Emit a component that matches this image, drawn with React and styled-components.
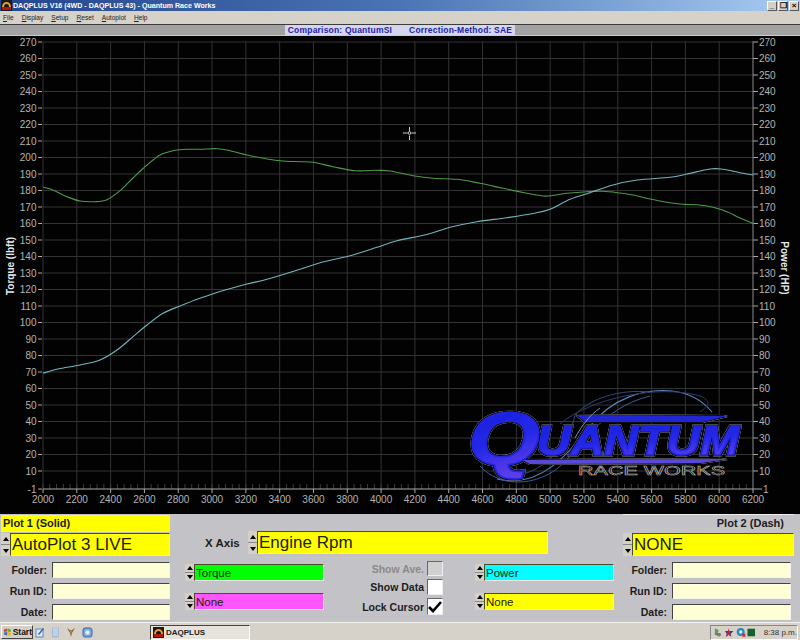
import styled, { createGlobalStyle } from 'styled-components';

const GlobalStyle = createGlobalStyle`
  html, body {
    margin: 0;
    background: #000;
    overflow: hidden;
  }
`;

const UI_FONT = '"Liberation Sans", Arial, sans-serif';

const torque = [
  [43, 187], [53, 190], [67, 196.7], [80, 201], [95, 201.7], [107, 199.7], [120, 190.7], [133, 178],
  [147, 165], [160, 155], [173, 150.7], [187, 149.3], [200, 149.3], [217, 148.7], [230, 150.7], [247, 155],
  [267, 159], [283, 161], [300, 161.7], [313, 162.3], [333, 166.7], [355, 170.7], [377, 170.3], [390, 171],
  [413, 175.7], [433, 178.3], [457, 179.3], [480, 183.3], [503, 188.3], [527, 193.3], [543, 196], [550, 195.7],
  [567, 193.3], [587, 191.7], [603, 191.3], [620, 193], [633, 195], [650, 199], [667, 202.3], [683, 204.3],
  [697, 204.7], [713, 207.3], [727, 211.7], [740, 218], [753, 223.3],
];

const power = [
  [43, 373.3], [58, 369], [80, 365], [100, 360], [117, 350], [133, 336.7], [147, 325], [163, 313.3],
  [180, 306], [200, 298.3], [220, 291.5], [247, 284], [267, 279.3], [300, 269.3], [320, 262.7], [353, 255],
  [377, 247.3], [397, 240.7], [427, 234.5], [450, 227.3], [477, 221.7], [507, 217.7], [533, 213.5], [550, 209.3],
  [570, 199.3], [590, 192.7], [613, 185], [637, 180], [670, 177.3], [687, 174], [710, 169], [723, 169.3],
  [740, 172.7], [753, 175],
];

// catmull-rom through the sampled points
const smooth = (pts) => {
  let d = `M${pts[0][0]} ${pts[0][1]}`;
  for (let i = 0; i < pts.length - 1; i++) {
    const p0 = pts[i - 1] || pts[i];
    const p1 = pts[i];
    const p2 = pts[i + 1];
    const p3 = pts[i + 2] || p2;
    const c1x = p1[0] + (p2[0] - p0[0]) / 6;
    const c1y = p1[1] + (p2[1] - p0[1]) / 6;
    const c2x = p2[0] - (p3[0] - p1[0]) / 6;
    const c2y = p2[1] - (p3[1] - p1[1]) / 6;
    d += `C${c1x.toFixed(1)} ${c1y.toFixed(1)} ${c2x.toFixed(1)} ${c2y.toFixed(1)} ${p2[0]} ${p2[1]}`;
  }
  return d;
};

const PLOT_LEFT = 43;
const PLOT_RIGHT = 753;
const PLOT_TOP = 41.5;
const PLOT_BOTTOM = 489;
const STEP_X = (PLOT_RIGHT - PLOT_LEFT) / 21;
const yFor = (v) => 487.5 - v * 1.65;

const yValues = Array.from({ length: 27 }, (_, i) => 270 - i * 10);
const xValues = Array.from({ length: 22 }, (_, i) => i);
const minorTicks = Array.from({ length: 105 }, (_, i) => i);

const Screen = styled.div`
  width: 800px;
  height: 640px;
  display: flex;
  flex-direction: column;
  font-family: ${UI_FONT};
  background: #000;
  overflow: hidden;
`;

const TitleBar = styled.div`
  height: 11px;
  flex: none;
  display: flex;
  align-items: center;
  padding: 0 1px;
  background: linear-gradient(90deg, #24458f 0%, #4a74b4 50%, #a8ccf2 100%);
`;

const TitleText = styled.span`
  flex: 1;
  margin-left: 1px;
  font-size: 7.1px;
  font-weight: 700;
  color: #fff;
  white-space: nowrap;
`;

const WinButtons = styled.div`
  display: flex;
  gap: 1px;
`;

const WinButton = styled.div`
  width: 8px;
  height: 8px;
  background: #d4d0c8;
  border: 1px solid;
  border-color: #fff #555 #555 #fff;
  color: #000;
  font-size: 8px;
  font-weight: 700;
  line-height: 8px;
  text-align: center;
  overflow: hidden;
`;

const MenuBar = styled.div`
  height: 13px;
  flex: none;
  display: flex;
  align-items: center;
  gap: 8px;
  padding-left: 3px;
  background: #d6d2ca;
  border-bottom: 1px solid #3c3c3c;
  font-size: 6.6px;
  color: #222;

  u {
    text-decoration: underline;
  }
`;

const CompareBar = styled.div`
  height: 10px;
  flex: none;
  display: flex;
  justify-content: center;
  background: #a2a2a2;
  border-bottom: 1px solid #ccc;
`;

const CompareLabel = styled.div`
  width: 230px;
  display: flex;
  justify-content: center;
  gap: 17px;
  background: #d6d6ee;
  color: #2424ac;
  font-size: 8.5px;
  font-weight: 700;
  letter-spacing: 0.2px;
  line-height: 10px;
  white-space: nowrap;
`;

const ChartArea = styled.svg`
  display: block;
  flex: none;
  width: 800px;
  height: 478px;
  background: #020202;
`;

const AxisText = styled.text`
  font-family: ${UI_FONT};
  font-size: 10px;
  fill: #b4b4b4;
`;

const AxisTitle = styled.text`
  font-family: ${UI_FONT};
  font-size: 10px;
  font-weight: 700;
  fill: #e8e8e8;
  text-anchor: middle;
`;

const LogoLetters = styled.text`
  font-family: ${UI_FONT};
  font-weight: 700;
  font-style: italic;
  fill: url(#logoFill);
  stroke: #2228e0;
  stroke-width: 1.5;
  stroke-linejoin: miter;
`;

const LogoSub = styled.text`
  font-family: ${UI_FONT};
  font-size: 12.5px;
  fill: #060606;
  stroke: #bcbcbc;
  stroke-width: 0.5;
`;

const Panel = styled.div`
  height: 108px;
  flex: none;
  display: flex;
  background: #c3c3c7;
  font-size: 10.5px;
  font-weight: 700;
  color: #1c1c1c;
`;

const PlotColumn = styled.div`
  flex: none;
  width: ${(p) => p.$width}px;
  box-sizing: border-box;
  padding: ${(p) => p.$padding};
  display: flex;
  flex-direction: column;
`;

const CenterColumn = styled.div`
  flex: 1;
  display: flex;
  flex-direction: column;
  padding: 17px 0 0 13px;
`;

const PlotHeader = styled.div`
  height: 17px;
  line-height: 17px;
  padding: 0 ${(p) => (p.$right ? '10px' : '2px')} 0 2px;
  text-align: ${(p) => (p.$right ? 'right' : 'left')};
  background: ${(p) => (p.$right ? 'transparent' : '#ffff00')};
  border-top: ${(p) => (p.$right ? '1px solid #eee' : 'none')};
  margin-top: ${(p) => (p.$right ? '-1px' : '0')};
  font-size: 11px;
`;

const SpinRow = styled.div`
  display: flex;
  height: ${(p) => p.$height}px;
  margin-top: ${(p) => p.$top || 0}px;
  align-items: stretch;
`;

const Spinner = styled.div`
  flex: none;
  width: 9px;
  display: flex;
  flex-direction: column;
  background: #d4d0c8;
`;

const SpinUp = styled.div`
  flex: 1;
  display: flex;
  align-items: center;
  justify-content: center;
  border-bottom: 1px solid #8a8a8a;

  &::before {
    content: '';
    border: 3.5px solid transparent;
    border-top: 0;
    border-bottom: 4px solid #000;
  }
`;

const SpinDown = styled(SpinUp)`
  border-bottom: 0;

  &::before {
    border: 3.5px solid transparent;
    border-bottom: 0;
    border-top: 4px solid #000;
  }
`;

const Field = styled.div`
  flex: 1;
  min-width: 0;
  box-sizing: border-box;
  padding-left: 1px;
  display: flex;
  align-items: center;
  background: ${(p) => p.$bg};
  border: 1px solid;
  border-color: #4c4c30 #e8e8e8 #e8e8e8 #4c4c30;
  font-size: ${(p) => p.$size}px;
  font-weight: 400;
  color: #222200;
  white-space: nowrap;
`;

const InfoRows = styled.div`
  display: flex;
  flex-direction: column;
  gap: 5px;
  margin-top: 6px;
`;

const InfoRow = styled.div`
  height: 16px;
  display: flex;
  align-items: center;
`;

const InfoLabel = styled.div`
  width: ${(p) => p.$width}px;
  flex: none;
  text-align: right;
  padding-right: 5px;
  box-sizing: border-box;
`;

const InfoInput = styled.div`
  width: ${(p) => p.$width}px;
  height: 16px;
  box-sizing: border-box;
  background: #ffffd6;
  border: 1px solid;
  border-color: #444 #f4f4f4 #f4f4f4 #444;
`;

const XAxisRow = styled.div`
  display: flex;
  height: 23px;
  align-items: center;
  padding-left: 20px;
`;

const XAxisLabel = styled.div`
  width: 43px;
  font-size: 11.5px;
`;

const XAxisField = styled.div`
  display: flex;
  width: 300px;
  height: 23px;
`;

const SeriesGrid = styled.div`
  display: grid;
  grid-template-columns: 139px 151px 139px;
  margin-top: 7px;
`;

const SeriesColumn = styled.div`
  display: flex;
  flex-direction: column;
  gap: 12px;
  padding-top: 3px;
`;

const CheckColumn = styled.div`
  display: flex;
  flex-direction: column;
  gap: 3px;
  padding-right: 32px;
`;

const CheckRow = styled.div`
  display: flex;
  justify-content: flex-end;
  align-items: center;
  gap: 3px;
  color: ${(p) => (p.$disabled ? '#8a8a8a' : 'inherit')};
`;

const CheckBox = styled.div`
  width: 16px;
  height: ${(p) => p.$height}px;
  box-sizing: border-box;
  background: ${(p) => (p.$disabled ? '#d0d0d0' : '#fff')};
  border: 1px solid;
  border-color: #666 #eee #eee #666;
  display: flex;
  align-items: center;
  justify-content: center;
`;

const TaskBar = styled.div`
  height: 18px;
  flex: none;
  box-sizing: border-box;
  display: flex;
  align-items: center;
  padding: 1px 2px 0 1px;
  background: #d6d2ca;
  border-top: 1px solid #f4f2ec;
`;

const StartButton = styled.div`
  width: 32px;
  height: 14px;
  box-sizing: border-box;
  display: flex;
  align-items: center;
  gap: 1px;
  padding-left: 1px;
  background: #d4d0c8;
  border: 1px solid;
  border-color: #fff #444 #444 #fff;
  font-size: 8.5px;
  font-weight: 700;
  color: #111;
`;

const QuickIcons = styled.div`
  display: flex;
  gap: 6px;
  margin-left: 2px;
  width: 115px;
`;

const TaskButton = styled.div`
  width: 100px;
  height: 15px;
  box-sizing: border-box;
  display: flex;
  align-items: center;
  gap: 2px;
  padding-left: 2px;
  background: #e6e3dc;
  border: 1px solid;
  border-color: #444 #fff #fff #444;
  font-size: 8px;
  font-weight: 700;
  color: #222;
`;

const Tray = styled.div`
  margin-left: auto;
  width: 88px;
  height: 15px;
  box-sizing: border-box;
  display: flex;
  align-items: center;
  gap: 1px;
  padding-left: 2px;
  border: 1px solid;
  border-color: #888 #fff #fff #888;
  font-size: 8px;
  color: #333;
`;

const Clock = styled.span`
  margin-left: 7px;
  white-space: nowrap;
`;

const AppIcon = ({ size = 11 }) => (
  <svg width={size} height={size} viewBox="0 0 11 11">
    <rect width="11" height="11" fill="#1a1a1a" />
    <path d="M1 7a4.5 5 0 0 1 9 0z" fill="#e8a020" />
    <path d="M1 7h9v3H1z" fill="#b01808" />
    <path d="M3 7a2.5 3 0 0 1 5 0z" fill="#111" />
  </svg>
);

const StartFlag = () => (
  <svg width="10" height="10" viewBox="0 0 10 10">
    <path d="M1 2l4-1v3.5L1 5z" fill="#d8482a" />
    <path d="M5.5 1L9 2v3L5.5 4.5z" fill="#6aa82c" />
    <path d="M1 5.5l4-.5v4l-4-1z" fill="#3a6cc8" />
    <path d="M5.5 5L9 5.5V9L5.5 9z" fill="#e8b820" />
  </svg>
);

const NoteIcon = () => (
  <svg width="10" height="11" viewBox="0 0 10 11">
    <rect x="1" y="2" width="7" height="8" fill="#dfe8f4" stroke="#4a70b0" strokeWidth="0.8" />
    <path d="M3 7l5-6 1 1-5 6z" fill="#2a60b8" />
  </svg>
);

const PageIcon = () => (
  <svg width="9" height="11" viewBox="0 0 9 11">
    <rect x="1" y="0.5" width="7" height="10" fill="#a8bcd8" />
    <path d="M2 2h5M2 4h5M2 6h5M2 8h5" stroke="#e6eef8" strokeWidth="0.8" />
  </svg>
);

const BirdIcon = () => (
  <svg width="10" height="11" viewBox="0 0 10 11">
    <path d="M1 1l3 5 1 4 1-4 3-5-3 2-1 3-1-3z" fill="#a85a30" />
    <path d="M4 3l1 5 1-5z" fill="#5a9a50" />
  </svg>
);

const GlobeIcon = () => (
  <svg width="11" height="11" viewBox="0 0 11 11">
    <rect x="1" y="1" width="9" height="9" rx="2" fill="#7aa8d8" stroke="#3a6aa8" />
    <circle cx="5.5" cy="5.5" r="2.2" fill="#e4eef8" />
  </svg>
);

const TrayNet = () => (
  <svg width="11" height="11" viewBox="0 0 11 11">
    <path d="M2 1l4 2-1 3 4 2-2 2-5-2z" fill="#5a9a5a" />
    <path d="M2 6h6v2H2z" fill="#777" />
  </svg>
);

const TrayStar = () => (
  <svg width="11" height="11" viewBox="0 0 11 11">
    <path d="M1 4h9L7 7l1 3-3-2-3 2 1-3z" fill="#3a3a80" />
    <path d="M5 1l2 9-2-2-3 2z" fill="#c82838" />
  </svg>
);

const TrayGlobe = () => (
  <svg width="11" height="11" viewBox="0 0 11 11">
    <circle cx="5" cy="5" r="4.2" fill="#2a88c0" />
    <circle cx="5" cy="5" r="1.8" fill="#e8f0f8" />
    <path d="M7 7l3 3M10 7l-3 3" stroke="#c82020" strokeWidth="1.2" />
  </svg>
);

const TraySquare = () => (
  <svg width="9" height="9" viewBox="0 0 9 9">
    <rect width="8" height="8" x="0.5" y="0.5" fill="#14602a" />
  </svg>
);

const QuantumLogo = () => (
  <g>
    <defs>
      <linearGradient id="logoFill" x1="0" y1="0" x2="0.3" y2="1">
        <stop offset="0" stopColor="#1a1ad8" />
        <stop offset="0.6" stopColor="#2228e8" />
        <stop offset="1" stopColor="#5a3ce8" />
      </linearGradient>
      <filter id="logoEdge" x="-5%" y="-10%" width="110%" height="120%">
        <feMorphology in="SourceAlpha" operator="dilate" radius="0.7" result="inner" />
        <feFlood floodColor="#0a0a10" />
        <feComposite in2="inner" operator="in" result="dark" />
        <feMorphology in="SourceAlpha" operator="dilate" radius="1.3" result="outer" />
        <feFlood floodColor="#9a9cb0" />
        <feComposite in2="outer" operator="in" result="light" />
        <feMerge>
          <feMergeNode in="light" />
          <feMergeNode in="dark" />
          <feMergeNode in="SourceGraphic" />
        </feMerge>
      </filter>
    </defs>
    <g fill="none">
      <path d="M497 479C540 490 570 452 590 426C612 398 645 388 672 391C690 393 702 400 712 412" stroke="#5a86b8" strokeWidth="1.1" />
      <path d="M480 466C500 488 535 486 558 468C580 450 600 408 650 396" stroke="#3c5a98" strokeWidth="1" />
      <path d="M500 476C545 480 570 440 575 415C590 398 620 389 650 392" stroke="#30487c" strokeWidth="1" />
      <path d="M560 424C590 398 660 384 700 396C715 402 705 408 700 412" stroke="#2a3c70" strokeWidth="1" />
    </g>
    <g filter="url(#logoEdge)">
      <path d="M577 415L727 416L702 422L585 422Z" fill="#2226d0" />
      <path d="M523 460L727 459L700 463L530 464Z" fill="#5a48d8" />
      <LogoLetters x="468" y="464" fontSize="74" textLength="72" lengthAdjust="spacingAndGlyphs">Q</LogoLetters>
      <LogoLetters x="537" y="455" fontSize="42" textLength="202" lengthAdjust="spacingAndGlyphs">UANTUM</LogoLetters>
    </g>
    <path d="M575 438C582 425 590 415 600 408" fill="none" stroke="#7aa4d0" strokeWidth="0.9" />
    <LogoSub x="578" y="474.5" textLength="147" lengthAdjust="spacingAndGlyphs">RACE WORKS</LogoSub>
  </g>
);

const Chart = () => (
  <ChartArea viewBox="0 36 800 478">
    {yValues.map((v) => (
      <g key={v}>
        <line x1={PLOT_LEFT} x2={PLOT_RIGHT} y1={yFor(v)} y2={yFor(v)} stroke="#333" />
        <line x1="38" x2="42" y1={yFor(v)} y2={yFor(v)} stroke="#aaa" />
        <line x1={PLOT_RIGHT} x2="758" y1={yFor(v)} y2={yFor(v)} stroke="#aaa" />
        <AxisText x="36.5" y={yFor(v) + 3.5} textAnchor="end">{v}</AxisText>
        <AxisText x="759" y={yFor(v) + 3.5}>{v}</AxisText>
      </g>
    ))}
    {xValues.map((i) => (
      <g key={i}>
        <line x1={PLOT_LEFT + i * STEP_X} x2={PLOT_LEFT + i * STEP_X} y1={PLOT_TOP} y2={PLOT_BOTTOM} stroke={i === 21 ? '#8a8a8a' : '#333'} />
        <line x1={PLOT_LEFT + i * STEP_X} x2={PLOT_LEFT + i * STEP_X} y1={PLOT_BOTTOM} y2="493" stroke="#aaa" />
        <AxisText x={PLOT_LEFT + i * STEP_X} y="503" textAnchor="middle">{2000 + i * 200}</AxisText>
      </g>
    ))}
    {minorTicks.map((i) => (
      <line key={i} x1={PLOT_LEFT + (i * STEP_X) / 5} x2={PLOT_LEFT + (i * STEP_X) / 5} y1="484" y2={PLOT_BOTTOM} stroke="#3c3c3c" />
    ))}
    <line x1={PLOT_LEFT} x2={PLOT_RIGHT} y1={PLOT_BOTTOM} y2={PLOT_BOTTOM} stroke="#aaa" />
    <line x1="38" x2="42" y1={PLOT_BOTTOM} y2={PLOT_BOTTOM} stroke="#aaa" />
    <line x1={PLOT_RIGHT} x2="762" y1={PLOT_BOTTOM} y2={PLOT_BOTTOM} stroke="#aaa" />
    <AxisText x="36.5" y="493" textAnchor="end">-1</AxisText>
    <AxisText x="763" y="493">1</AxisText>

    <QuantumLogo />

    <path d={smooth(torque)} fill="none" stroke="#4e9a48" strokeWidth="1.1" />
    <path d={smooth(power)} fill="none" stroke="#74b4bc" strokeWidth="1.1" />

    <g stroke="#cfcfcf" fill="none">
      <path d="M403 133h4.5M411.5 133h4.5M409.5 127v4.5M409.5 135.5v4.5" />
      <circle cx="409.5" cy="133" r="1.4" />
    </g>

    <AxisTitle transform="translate(14 266) rotate(-90)">Torque (lbft)</AxisTitle>
    <AxisTitle transform="translate(781 268) rotate(90)">Power (HP)</AxisTitle>
  </ChartArea>
);

const Spin = () => (
  <Spinner>
    <SpinUp />
    <SpinDown />
  </Spinner>
);

const Selector = ({ bg, children }) => (
  <SpinRow $height={17}>
    <Spin />
    <Field $bg={bg} $size={11.5}>{children}</Field>
  </SpinRow>
);

const InfoFields = ({ labelWidth, inputWidth }) => (
  <InfoRows>
    {['Folder:', 'Run ID:', 'Date:'].map((label) => (
      <InfoRow key={label}>
        <InfoLabel $width={labelWidth}>{label}</InfoLabel>
        <InfoInput $width={inputWidth} />
      </InfoRow>
    ))}
  </InfoRows>
);

const App = () => (
  <Screen>
    <GlobalStyle />
    <TitleBar>
      <AppIcon />
      <TitleText>DAQPLUS V16 (4WD - DAQPLUS 43) - Quantum Race Works</TitleText>
      <WinButtons>
        <WinButton>_</WinButton>
        <WinButton>❐</WinButton>
        <WinButton>×</WinButton>
      </WinButtons>
    </TitleBar>
    <MenuBar>
      <span><u>F</u>ile</span>
      <span><u>D</u>isplay</span>
      <span><u>S</u>etup</span>
      <span><u>R</u>eset</span>
      <span><u>A</u>utoplot</span>
      <span><u>H</u>elp</span>
    </MenuBar>
    <CompareBar>
      <CompareLabel>
        <span>Comparison: QuantumSI</span>
        <span>Correction-Method: SAE</span>
      </CompareLabel>
    </CompareBar>
    <Chart />
    <Panel>
      <PlotColumn $width={172} $padding="1px 2px 0 1px">
        <PlotHeader>Plot 1 (Solid)</PlotHeader>
        <SpinRow $height={23} $top={1}>
          <Spin />
          <Field $bg="#ffff00" $size={17}>AutoPlot 3 LIVE</Field>
        </SpinRow>
        <InfoFields labelWidth={51} inputWidth={118} />
      </PlotColumn>
      <CenterColumn>
        <XAxisRow>
          <XAxisLabel>X Axis</XAxisLabel>
          <XAxisField>
            <Spin />
            <Field $bg="#ffff00" $size={17}>Engine Rpm</Field>
          </XAxisField>
        </XAxisRow>
        <SeriesGrid>
          <SeriesColumn>
            <Selector bg="#00ff00">Torque</Selector>
            <Selector bg="#ff55ff">None</Selector>
          </SeriesColumn>
          <CheckColumn>
            <CheckRow $disabled>
              Show Ave.
              <CheckBox $height={15} $disabled />
            </CheckRow>
            <CheckRow>
              Show Data
              <CheckBox $height={16} />
            </CheckRow>
            <CheckRow>
              Lock Cursor
              <CheckBox $height={17}>
                <svg width="14" height="12" viewBox="0 0 14 12">
                  <path d="M1 6l4 4 8-9" fill="none" stroke="#000" strokeWidth="2.6" />
                </svg>
              </CheckBox>
            </CheckRow>
          </CheckColumn>
          <SeriesColumn>
            <Selector bg="#00ffff">Power</Selector>
            <Selector bg="#ffff00">None</Selector>
          </SeriesColumn>
        </SeriesGrid>
      </CenterColumn>
      <PlotColumn $width={178} $padding="1px 6px 0 1px">
        <PlotHeader $right>Plot 2 (Dash)</PlotHeader>
        <SpinRow $height={23} $top={1}>
          <Spin />
          <Field $bg="#ffff00" $size={17}>NONE</Field>
        </SpinRow>
        <InfoFields labelWidth={49} inputWidth={119} />
      </PlotColumn>
    </Panel>
    <TaskBar>
      <StartButton>
        <StartFlag />
        Start
      </StartButton>
      <QuickIcons>
        <NoteIcon />
        <PageIcon />
        <BirdIcon />
        <GlobeIcon />
      </QuickIcons>
      <TaskButton>
        <AppIcon />
        DAQPLUS
      </TaskButton>
      <Tray>
        <TrayNet />
        <TrayStar />
        <TrayGlobe />
        <TraySquare />
        <Clock>8:38 p.m.</Clock>
      </Tray>
    </TaskBar>
  </Screen>
);

export default App;
